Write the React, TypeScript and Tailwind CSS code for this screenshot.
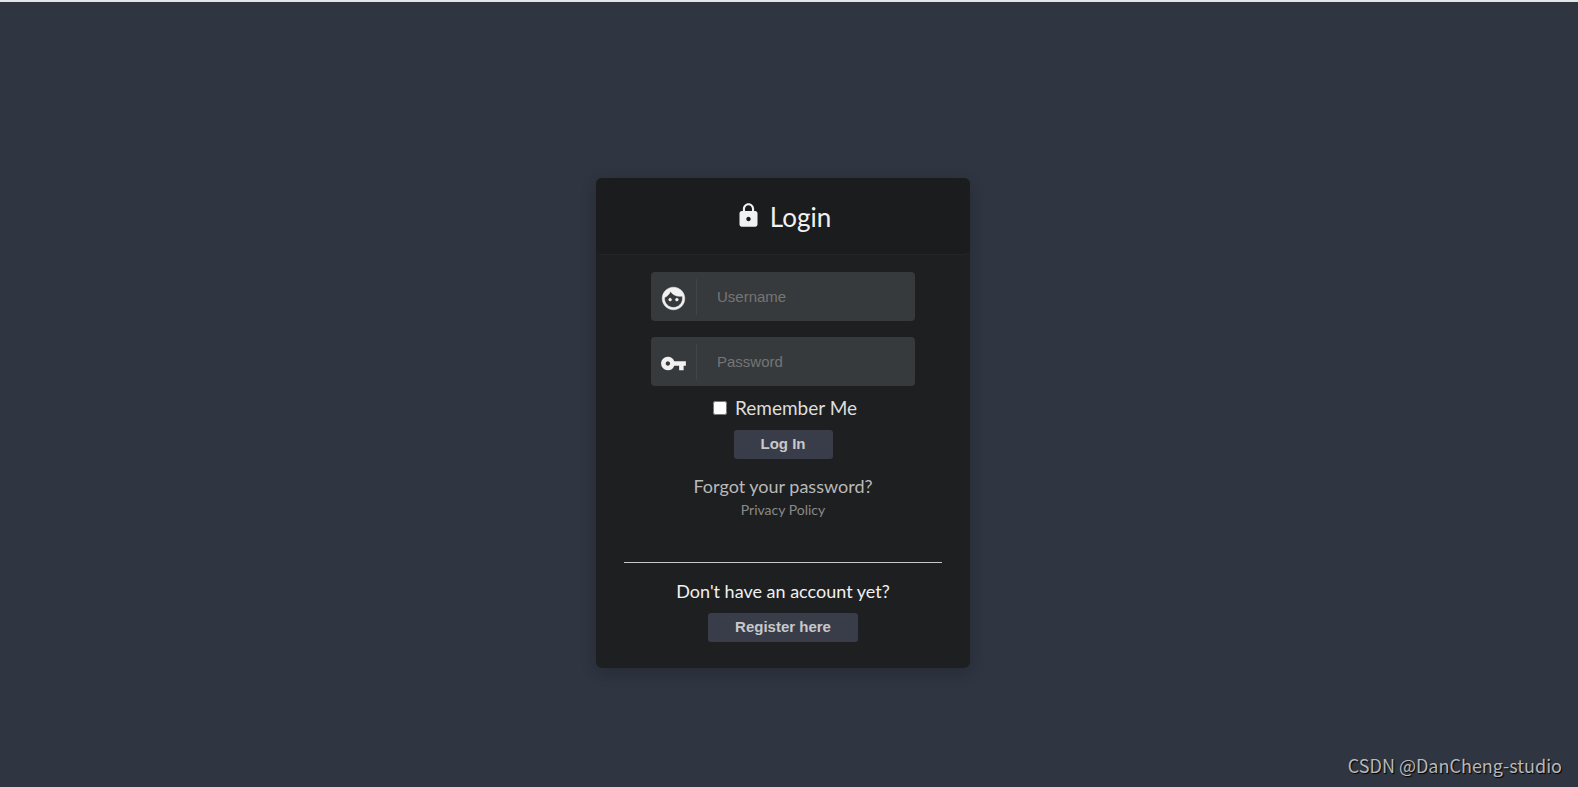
import React from "react";
import { MdLock, MdVpnKey } from "react-icons/md";

interface FieldProps {
  id: string;
  type: string;
  label: string;
  icon: React.ReactNode;
}

const FaceIcon = () => {
  return (
    <svg
      viewBox="0 0 24 24"
      className="size-[27px]"
      fill="currentColor"
      stroke="currentColor"
      strokeWidth="0.5"
    >
      <path d="M9 11.75c-.69 0-1.25.56-1.25 1.25s.56 1.25 1.25 1.25 1.25-.56 1.25-1.25-.56-1.25-1.25-1.25zm6 0c-.69 0-1.25.56-1.25 1.25s.56 1.25 1.25 1.25 1.25-.56 1.25-1.25-.56-1.25-1.25-1.25zM12 2C6.48 2 2 6.48 2 12s4.48 10 10 10 10-4.48 10-10S17.52 2 12 2zm0 18c-4.41 0-8-3.59-8-8 0-.29.02-.58.05-.86 2.36-1.05 4.23-2.98 5.21-5.37C11.07 8.33 14.05 10 17.42 10c.78 0 1.53-.09 2.25-.26.21.71.33 1.47.33 2.26 0 4.41-3.59 8-8 8z" />
    </svg>
  );
};

const Field = ({ id, type, label, icon }: FieldProps) => {
  return (
    <div className="flex h-[49px] w-[264px] items-center rounded bg-[#373a3c]">
      <label
        htmlFor={id}
        aria-label={label}
        className="flex h-9 w-[46px] items-center justify-center border-r border-[#424547] pt-1 text-[#f1f1f2]"
      >
        {icon}
      </label>
      <input
        id={id}
        type={type}
        placeholder={label}
        className="h-full min-w-0 flex-1 bg-transparent pr-4 pl-5 font-['Liberation_Sans',sans-serif] text-[15px] text-gray-200 outline-none placeholder:text-[#757575]"
      />
    </div>
  );
};

interface ActionButtonProps {
  type?: "button" | "submit";
  children: React.ReactNode;
}

const ActionButton = ({ type = "button", children }: ActionButtonProps) => {
  return (
    <button
      type={type}
      className="h-[29px] rounded-[3px] bg-[#393d49] px-[27px] pb-0.5 font-['Liberation_Sans',sans-serif] text-[15px] font-bold text-[#c8c8cb]"
    >
      {children}
    </button>
  );
};

const App = () => {
  return (
    <div className="relative min-h-screen border-t-2 border-[#e3e5e8] bg-[#2f3541] pt-44 pr-3 font-['Lato',sans-serif] text-lg">
      <main className="mx-auto w-[374px] rounded-md bg-[#1e1f20] pb-[26px] shadow-[0_4px_16px_rgba(0,0,0,0.2)]">
        {/* Card header */}
        <header className="flex h-[77px] items-center justify-center gap-2 rounded-md border-b border-[#242526] bg-[#1b1c1d] pt-0.5 text-[#f1f1f2]">
          <MdLock className="mb-1 size-[27px]" />
          <h1 className="text-[26px]">Login</h1>
        </header>

        {/* Login form */}
        <form
          className="flex flex-col items-center pt-[17px]"
          onSubmit={(e) => e.preventDefault()}
        >
          <div className="flex flex-col gap-4">
            <Field
              id="username"
              type="text"
              label="Username"
              icon={<FaceIcon />}
            />
            <Field
              id="password"
              type="password"
              label="Password"
              icon={<MdVpnKey className="size-[27px]" />}
            />
          </div>
          <label className="mt-2 mb-2 flex items-center gap-2 pl-1 text-[19px] leading-7 text-[#dedede]">
            <input type="checkbox" className="size-3.5" />
            Remember Me
          </label>
          <ActionButton type="submit">Log In</ActionButton>
        </form>

        {/* Help links */}
        <div className="mt-[13px] flex flex-col items-center">
          <a href="#forgot" className="text-[#b9b9ba]">
            Forgot your password?
          </a>
          <a href="#privacy" className="text-sm text-[#8a8a8b]">
            Privacy Policy
          </a>
        </div>

        <hr className="mx-7 mt-[42px] border-[#c8c8c8]" />

        {/* Sign up */}
        <div className="mt-3.5 flex flex-col items-center gap-2">
          <p className="text-[#f1f1f2]">Don't have an account yet?</p>
          <ActionButton>Register here</ActionButton>
        </div>
      </main>

      <span className="absolute right-4 bottom-2 font-['Noto_Sans_CJK_SC',sans-serif] text-lg text-[#b8b8b8] [text-shadow:1px_1px_1px_#000]">
        CSDN @DanCheng-studio
      </span>
    </div>
  );
};

export default App;
